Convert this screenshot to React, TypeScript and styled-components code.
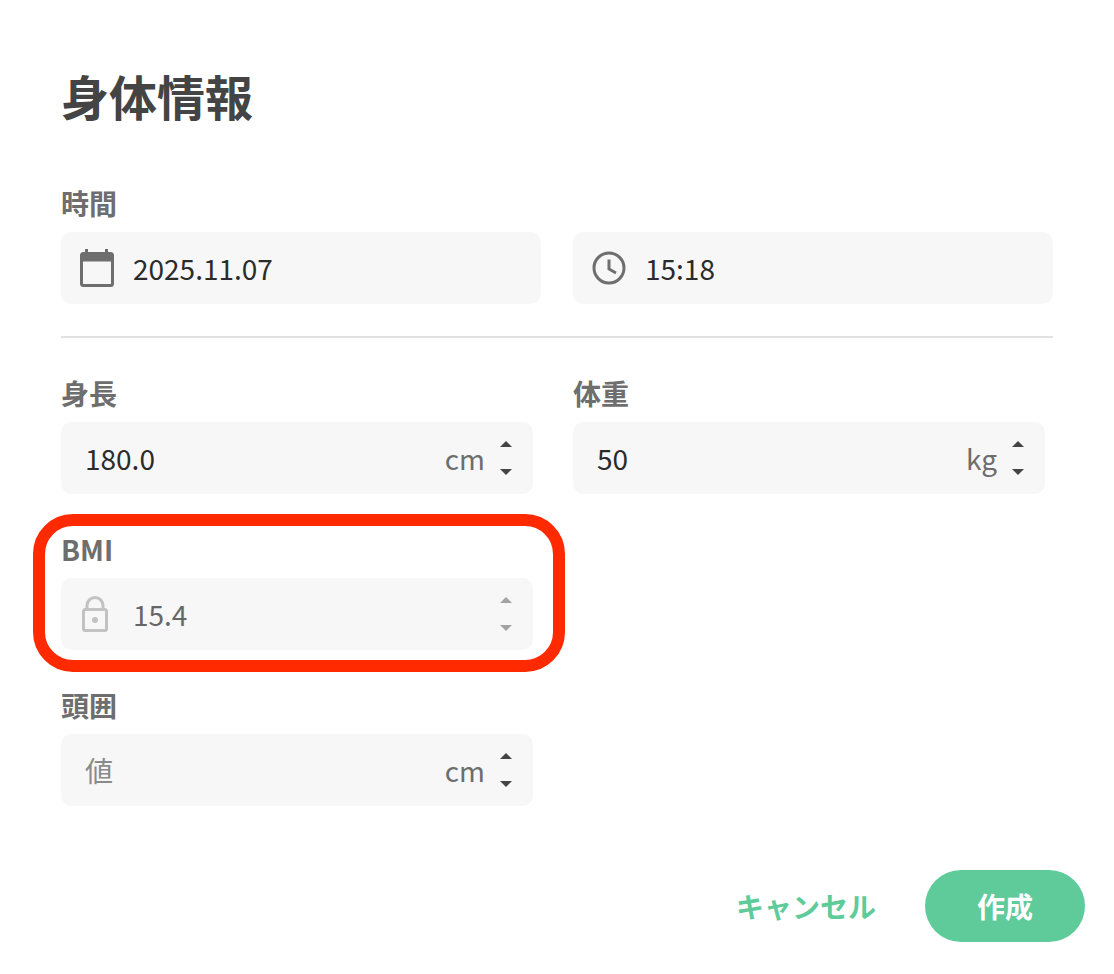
import * as React from "react";
import styled, { createGlobalStyle } from "styled-components";

const GlobalStyle = createGlobalStyle`
  html, body {
    margin: 0;
    padding: 0;
    background: #ffffff;
  }
  body {
    font-family: "Noto Sans CJK JP", "Noto Sans", sans-serif;
  }
`;

const Dialog = styled.div`
  position: relative;
  box-sizing: border-box;
  width: 1114px;
  height: 974px;
  padding: 63px 61px 0 61px;
  background: #ffffff;
  overflow: hidden;
`;

const Title = styled.h1`
  margin: 0 0 57px 0;
  height: 64px;
  font-size: 48px;
  line-height: 64px;
  font-weight: 700;
  color: #444444;
`;

const Row = styled.div`
  display: grid;
  grid-template-columns: 480px 480px;
  column-gap: 32px;
`;

const Field = styled.div<{ $tight?: boolean }>`
  width: ${(p) => (p.$tight ? "472px" : "480px")};
`;

const Section = styled.div`
  margin-top: 36px;
`;

const Label = styled.div`
  height: 40px;
  margin-bottom: 8px;
  font-size: 28px;
  line-height: 38px;
  font-weight: 700;
  color: #6e6e6e;
`;

const InputBox = styled.div`
  display: flex;
  align-items: center;
  box-sizing: border-box;
  height: 72px;
  padding: 0 20px 0 24px;
  border-radius: 10px;
  background: #f7f7f7;
`;

const IconSlot = styled.span`
  display: flex;
  flex: none;
  width: 34px;
  margin: 0 19px 0 -5px;
  align-items: center;
  justify-content: center;
`;

const Value = styled.span<{ $tone?: "normal" | "disabled" | "placeholder" }>`
  flex: 1;
  font-size: 28px;
  line-height: 40px;
  color: ${(p) =>
    p.$tone === "disabled" ? "#666666" : p.$tone === "placeholder" ? "#8a8a8a" : "#2b2b2b"};
`;

const Unit = styled.span`
  margin-right: 14px;
  font-size: 28px;
  line-height: 40px;
  color: #6e6e6e;
`;

const Stepper = styled.span`
  display: flex;
  flex: none;
  flex-direction: column;
  align-items: center;
  gap: 22px;
  width: 14px;
`;

const Arrow = styled.span<{ $down?: boolean; $muted?: boolean }>`
  width: 0;
  height: 0;
  border-left: 6px solid transparent;
  border-right: 6px solid transparent;
  ${(p) => (p.$down ? "border-top" : "border-bottom")}: 6px solid ${(p) =>
    p.$muted ? "#a3a3a3" : "#444444"};
`;

const Divider = styled.hr`
  height: 2px;
  margin: 32px 0 0 0;
  border: 0;
  background: #e2e2e2;
`;

const Footer = styled.div`
  display: flex;
  align-items: center;
  justify-content: flex-end;
  gap: 49px;
  margin: 64px -32px 0 0;
`;

const CancelButton = styled.button`
  padding: 0;
  border: 0;
  background: none;
  font-family: inherit;
  font-size: 28px;
  line-height: 40px;
  font-weight: 700;
  color: #5fcb9a;
`;

const CreateButton = styled.button`
  width: 160px;
  height: 72px;
  padding: 0;
  border: 0;
  border-radius: 36px;
  background: #5fcb9a;
  font-family: inherit;
  font-size: 28px;
  line-height: 40px;
  font-weight: 700;
  color: #ffffff;
`;

const Highlight = styled.div`
  position: absolute;
  left: 33px;
  top: 514px;
  box-sizing: border-box;
  width: 532px;
  height: 158px;
  border: 12px solid #ff2a00;
  border-radius: 40px;
  pointer-events: none;
`;

const LockSvg = styled.svg`
  margin-right: 4px;
`;

const CalendarIcon = () => (
  <svg width="34" height="38" viewBox="0 0 34 38">
    <path d="M6.500 0v5M26.500 0v5" stroke="#6e6e6e" strokeWidth="3" fill="none" />
    <rect x="1.500" y="4.500" width="31" height="32" rx="2" fill="none" stroke="#6e6e6e" strokeWidth="3" />
    <rect x="1.500" y="4.500" width="31" height="8" fill="#6e6e6e" />
  </svg>
);

const ClockIcon = () => (
  <svg width="34" height="34" viewBox="0 0 34 34">
    <circle cx="17" cy="17" r="15" fill="none" stroke="#6e6e6e" strokeWidth="3" />
    <path d="M17 8.500V18l7 4" fill="none" stroke="#6e6e6e" strokeWidth="3" />
  </svg>
);

const LockIcon = () => (
  <LockSvg width="26" height="36" viewBox="0 0 26 36">
    <path d="M5 14V9.500a8 8 0 0 1 16 0V14" fill="none" stroke="#c2c2c2" strokeWidth="3" />
    <rect x="1.500" y="13.500" width="23" height="21" rx="2" fill="none" stroke="#c2c2c2" strokeWidth="3" />
    <circle cx="13" cy="24" r="3" fill="#c2c2c2" />
  </LockSvg>
);

const Spinner = ({ muted }: { muted?: boolean }) => (
  <Stepper>
    <Arrow $muted={muted} />
    <Arrow $down $muted={muted} />
  </Stepper>
);

export default function App() {
  return (
    <Dialog>
      <GlobalStyle />
      <Title>身体情報</Title>
      <Label>時間</Label>
      <Row>
        <Field>
          <InputBox>
            <IconSlot>
              <CalendarIcon />
            </IconSlot>
            <Value>2025.11.07</Value>
          </InputBox>
        </Field>
        <Field>
          <InputBox>
            <IconSlot>
              <ClockIcon />
            </IconSlot>
            <Value>15:18</Value>
          </InputBox>
        </Field>
      </Row>
      <Divider />
      <Section>
        <Row>
          <Field $tight>
            <Label>身長</Label>
            <InputBox>
              <Value>180.0</Value>
              <Unit>cm</Unit>
              <Spinner />
            </InputBox>
          </Field>
          <Field $tight>
            <Label>体重</Label>
            <InputBox>
              <Value>50</Value>
              <Unit>kg</Unit>
              <Spinner />
            </InputBox>
          </Field>
        </Row>
      </Section>
      <Section>
        <Field $tight>
          <Label>BMI</Label>
          <InputBox>
            <IconSlot>
              <LockIcon />
            </IconSlot>
            <Value $tone="disabled">15.4</Value>
            <Spinner muted />
          </InputBox>
        </Field>
      </Section>
      <Section>
        <Field $tight>
          <Label>頭囲</Label>
          <InputBox>
            <Value $tone="placeholder">値</Value>
            <Unit>cm</Unit>
            <Spinner />
          </InputBox>
        </Field>
      </Section>
      <Footer>
        <CancelButton>キャンセル</CancelButton>
        <CreateButton>作成</CreateButton>
      </Footer>
      <Highlight />
    </Dialog>
  );
}
